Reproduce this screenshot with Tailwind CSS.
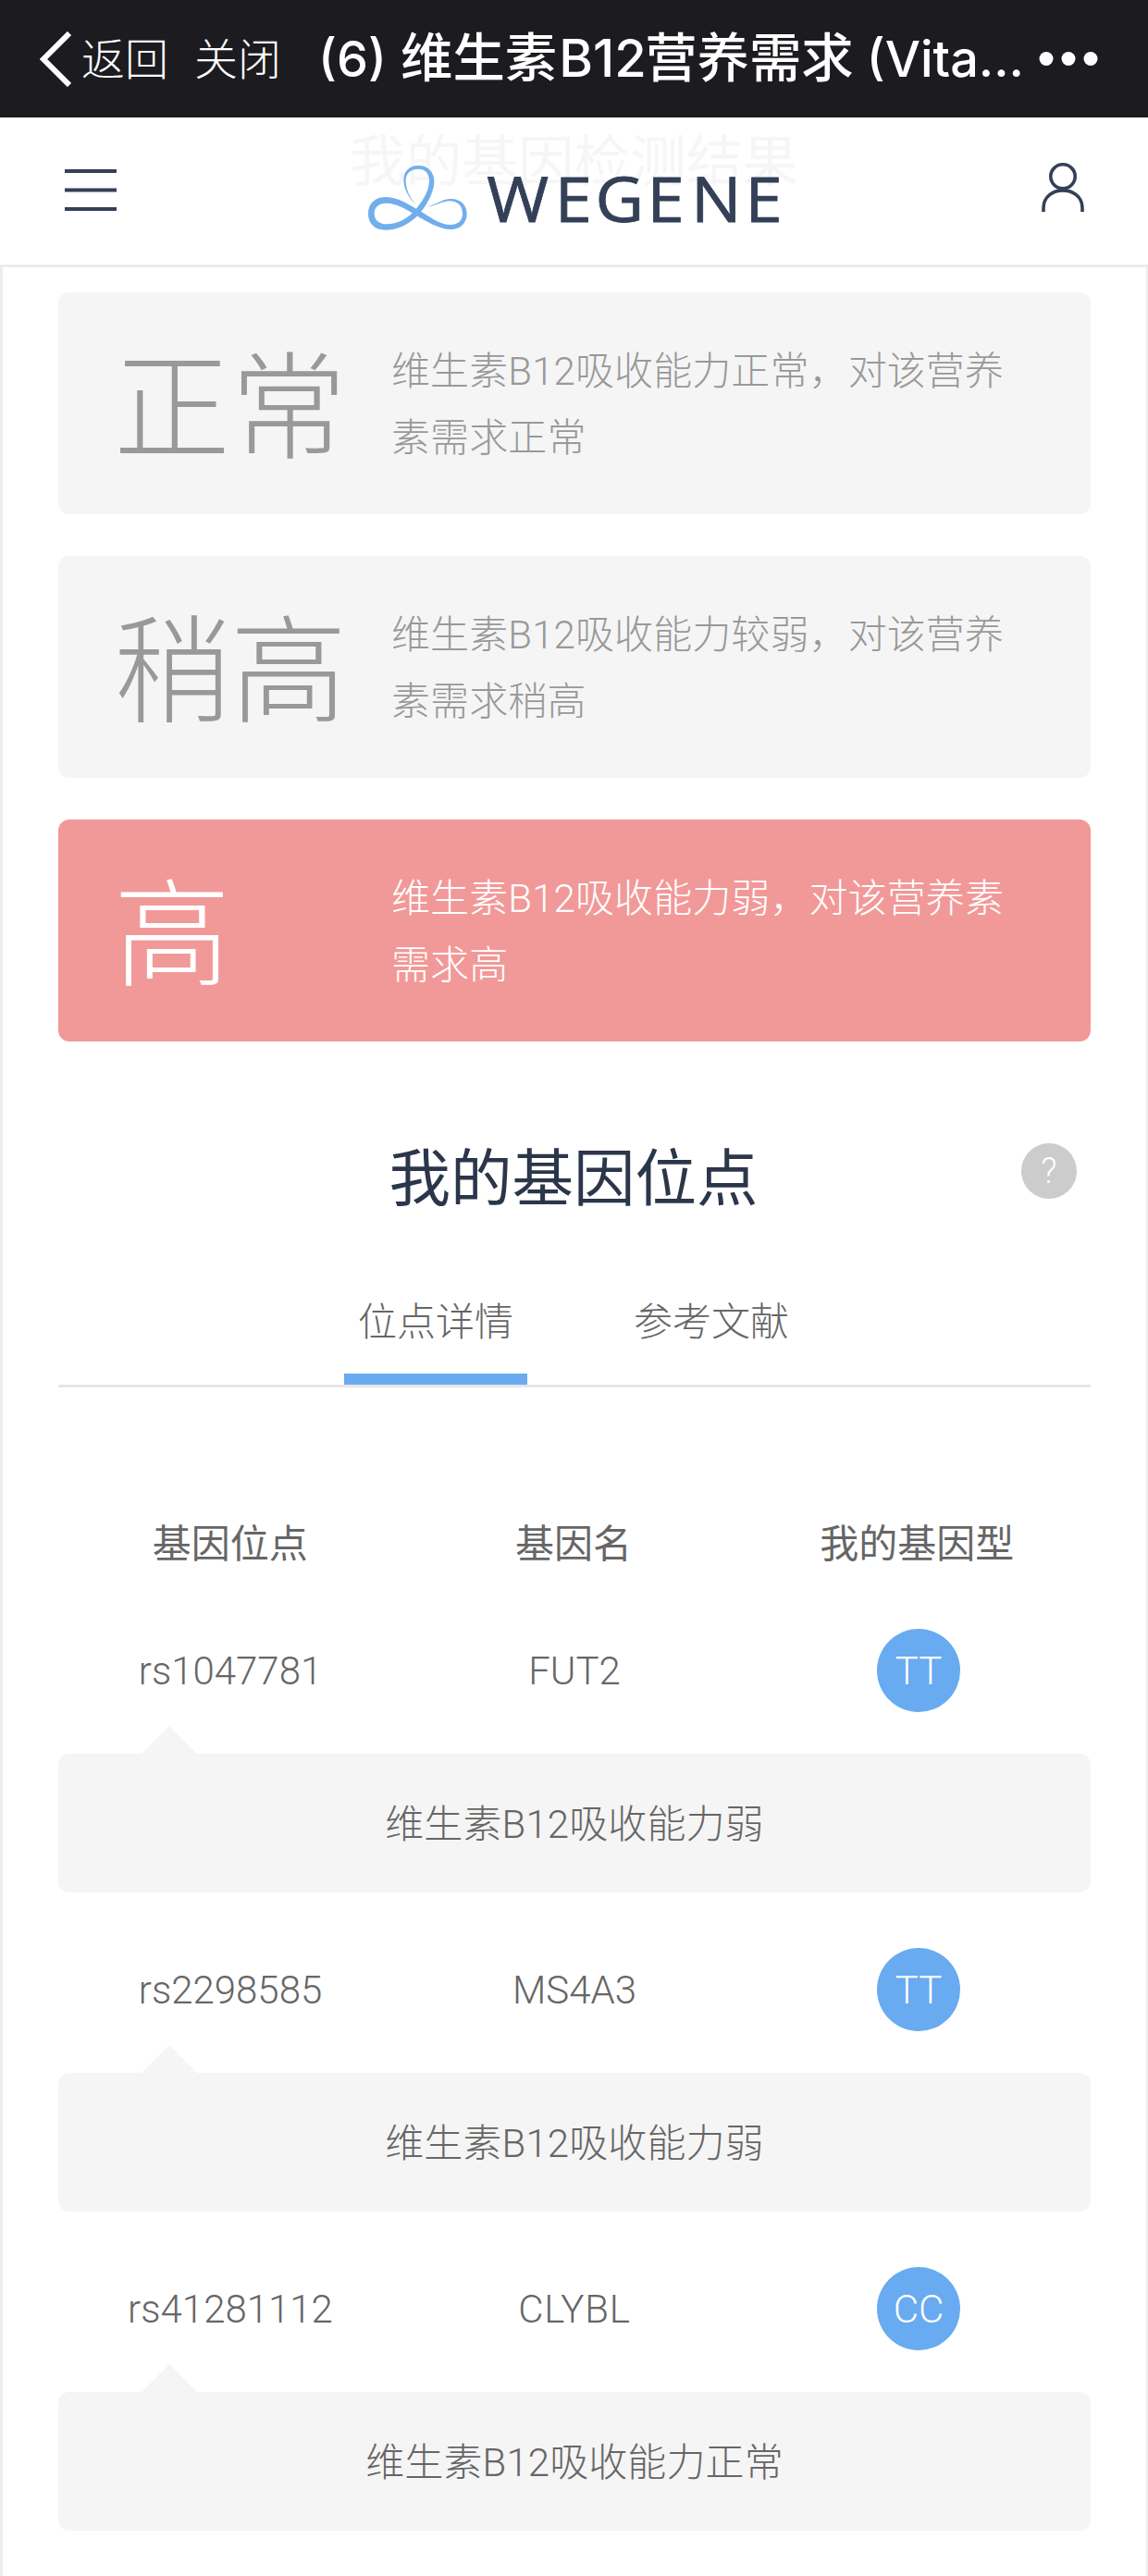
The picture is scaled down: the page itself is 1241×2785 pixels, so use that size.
<!DOCTYPE html>
<html lang="zh-CN">

<head>
    <meta charset="UTF-8">
    <meta name="viewport" content="width=device-width, initial-scale=1.0">
    <title>维生素B12营养需求</title>
    <script src="https://cdn.jsdelivr.net/npm/@tailwindcss/browser@4"></script>
</head>

<body class="bg-white font-['Roboto','Noto_Sans_CJK_SC',sans-serif] font-light text-[#666]">
    <div class="w-[1241px] h-[2785px] overflow-hidden">
        <!-- app title bar -->
        <div class="h-[127px] bg-[#1c1b20] text-white flex items-center pl-[43px] pr-[54px] whitespace-nowrap">
            <svg class="w-[34px] h-[60px] shrink-0" viewBox="0 0 34 60" fill="none" stroke="currentColor" stroke-width="6">
                <path d="M32 2 L4 30 L32 58" />
            </svg>
            <p class="w-[122px] pl-[11px] pb-[5px] text-[47px] font-['Noto_Sans_CJK_SC',sans-serif]">返回</p>
            <p class="w-[145px] pl-[11px] pb-[5px] text-[47px] font-['Noto_Sans_CJK_SC',sans-serif]">关闭</p>
            <h1 class="w-[779px] text-[56.4px] font-medium flex items-center font-['Inter','Noto_Sans_CJK_SC',sans-serif]">
                <span class="w-[89px] text-[54px]">(6)</span>
                <span>维生素</span>
                <span class="w-[95px] pl-[2px] text-[56px]">B12</span>
                <span>营养需求</span>
                <span class="pl-[14px] text-[54px]">(Vita...</span>
            </h1>
            <svg class="w-[64px] h-4 shrink-0" viewBox="0 0 64 16" fill="currentColor">
                <circle cx="8" cy="7.500" r="7.5" />
                <circle cx="32" cy="7.500" r="7.5" />
                <circle cx="56" cy="7.500" r="7.5" />
            </svg>
        </div>

        <!-- site header, page title still shows through -->
        <div class="relative h-[162px] border-b-[3px] border-[#ebeded] flex items-start pl-[70px]">
            <p class="absolute top-[4px] left-0 w-full text-center text-[60.6px] font-normal text-[#f6f6f9]">我的基因检测结果</p>
            <svg class="relative mt-[55px] w-[56px] h-[47px]" viewBox="0 0 56 47" fill="#334057">
                <rect y="1" width="56" height="4" />
                <rect y="21.500" width="56" height="4" />
                <rect y="42" width="56" height="4" />
            </svg>
            <svg class="relative ml-[262px] mt-[33px] w-[470px] h-[107px]" viewBox="0 0 470 107">
                <path transform="translate(-8 0) scale(.3333)" fill="#72aeec"
                    d="M212 187 C185 165 169 130 169 103 C169 75 188 57 217 57 C250 57 268 80 268 108 C268 150 235 200 210 224 C180 250 148 266 110 266 C75 266 54 245 54 213 C54 180 76 159 112 159 C150 159 190 186 215 200 C250 220 285 249 322 249 C345 249 360 235 360 214 C360 188 345 172 318 172 C295 172 272 189 240 192 C272 185 295 165 322 165 C355 165 374 185 374 215 C374 243 352 264 322 264 C285 264 240 236 210 218 C180 200 145 179 113 179 C88 179 74 192 74 213 C74 234 90 247 113 247 C150 247 180 230 200 208 C230 175 252 140 252 105 C252 82 238 68 217 68 C192 68 176 82 176 105 C176 135 190 165 212 187Z" />
                <text transform="scale(1.08 1)" x="128 196 236.500 288.500 332.500 386.500" y="80" font-size="67" font-weight="500" font-family="Open Sans" fill="#334057" stroke="#334057" stroke-width=".8">WEGENE</text>
            </svg>
            <svg class="relative ml-[267px] mt-[49px] w-[48px] h-[53px]" viewBox="0 0 48 53" fill="none" stroke="#334057" stroke-width="3.6">
                <ellipse cx="24" cy="14.800" rx="13.200" ry="13" />
                <path d="M3 53 V49 C3 23.500 45 23.500 45 49 V53" />
            </svg>
        </div>

        <div class="h-[2496px] border-l-[3px] border-r-2 border-[#ebedf0] px-[60px] pt-[27px]">
            <!-- result levels -->
            <div class="flex flex-col gap-[45px] leading-[72px] text-[42px]">
                <div class="h-[240px] rounded-xl bg-[#f5f5f5] text-[#999] flex items-center pl-[60px]">
                    <h2 class="w-[300px] pt-3.5 text-[126px] leading-[126px]">正常</h2>
                    <p class="w-[672px] pt-1 tracking-[0.1px]">维生素B12吸收能力正常，对该营养素需求正常</p>
                </div>
                <div class="h-[240px] rounded-xl bg-[#f5f5f5] text-[#999] flex items-center pl-[60px]">
                    <h2 class="w-[300px] pt-3.5 text-[126px] leading-[126px]">稍高</h2>
                    <p class="w-[672px] pt-1 tracking-[0.1px]">维生素B12吸收能力较弱，对该营养素需求稍高</p>
                </div>
                <div class="h-[240px] rounded-xl bg-[#f19998] text-white flex items-center pl-[60px]">
                    <h2 class="w-[300px] pt-3.5 text-[126px] leading-[126px]">高</h2>
                    <p class="w-[672px] pt-1 tracking-[0.1px]">维生素B12吸收能力弱，对该营养素需求高</p>
                </div>
            </div>

            <div class="relative mt-[96px] h-[100px]">
                <h2 class="pt-[3px] pr-[2px] text-center text-[66.500px] leading-[100px] font-normal text-[#2b364a]">我的基因位点</h2>
                <span class="absolute top-[14px] right-[15px] size-[60px] rounded-full bg-[#ccc] text-white text-[38px] leading-[60px] text-center">?</span>
            </div>

            <!-- tabs -->
            <div class="mt-[62px] h-[116px] pr-[2px] border-b-[3px] border-[#e6e6e6] flex justify-center gap-[100px] text-[42px] leading-[80px]">
                <p class="w-[198px] pt-[6px] text-center border-b-[12px] border-[#68abf0]">位点详情</p>
                <p class="w-[198px] pt-[6px] text-center">参考文献</p>
            </div>

            <!-- gene table -->
            <div class="mt-[140px] pr-[2px] grid grid-cols-3 text-center text-[42px] leading-[60px] font-normal">
                <p>基因位点</p>
                <p>基因名</p>
                <p>我的基因型</p>
            </div>
            <div class="mt-[61px] flex flex-col gap-[60px] text-[42px] text-center">
                <div>
                    <div class="grid grid-cols-3 h-[90px] leading-[92px]">
                        <p>rs1047781</p>
                        <p>FUT2</p>
                        <p class="size-[90px] mx-auto rounded-full bg-[#68abf0] text-white">TT</p>
                    </div>
                    <div class="relative mt-[45px] h-[150px] pt-[2px] leading-[150px] tracking-[0.1px] rounded-xl bg-[#f5f5f5]">
                        <svg class="absolute -top-[30px] left-[90px] w-[60px] h-[30px]" viewBox="0 0 60 30" fill="#f5f5f5"><path d="M0 30 L30 0 L60 30Z" /></svg>
                        维生素B12吸收能力弱
                    </div>
                </div>
                <div>
                    <div class="grid grid-cols-3 h-[90px] leading-[92px]">
                        <p>rs2298585</p>
                        <p>MS4A3</p>
                        <p class="size-[90px] mx-auto rounded-full bg-[#68abf0] text-white">TT</p>
                    </div>
                    <div class="relative mt-[45px] h-[150px] pt-[2px] leading-[150px] tracking-[0.1px] rounded-xl bg-[#f5f5f5]">
                        <svg class="absolute -top-[30px] left-[90px] w-[60px] h-[30px]" viewBox="0 0 60 30" fill="#f5f5f5"><path d="M0 30 L30 0 L60 30Z" /></svg>
                        维生素B12吸收能力弱
                    </div>
                </div>
                <div>
                    <div class="grid grid-cols-3 h-[90px] leading-[92px]">
                        <p>rs41281112</p>
                        <p class="tracking-[0.8px]">CLYBL</p>
                        <p class="size-[90px] mx-auto rounded-full bg-[#68abf0] text-white">CC</p>
                    </div>
                    <div class="relative mt-[45px] h-[150px] pt-[2px] leading-[150px] tracking-[0.1px] rounded-xl bg-[#f5f5f5]">
                        <svg class="absolute -top-[30px] left-[90px] w-[60px] h-[30px]" viewBox="0 0 60 30" fill="#f5f5f5"><path d="M0 30 L30 0 L60 30Z" /></svg>
                        维生素B12吸收能力正常
                    </div>
                </div>
            </div>
        </div>
    </div>
</body>

</html>
